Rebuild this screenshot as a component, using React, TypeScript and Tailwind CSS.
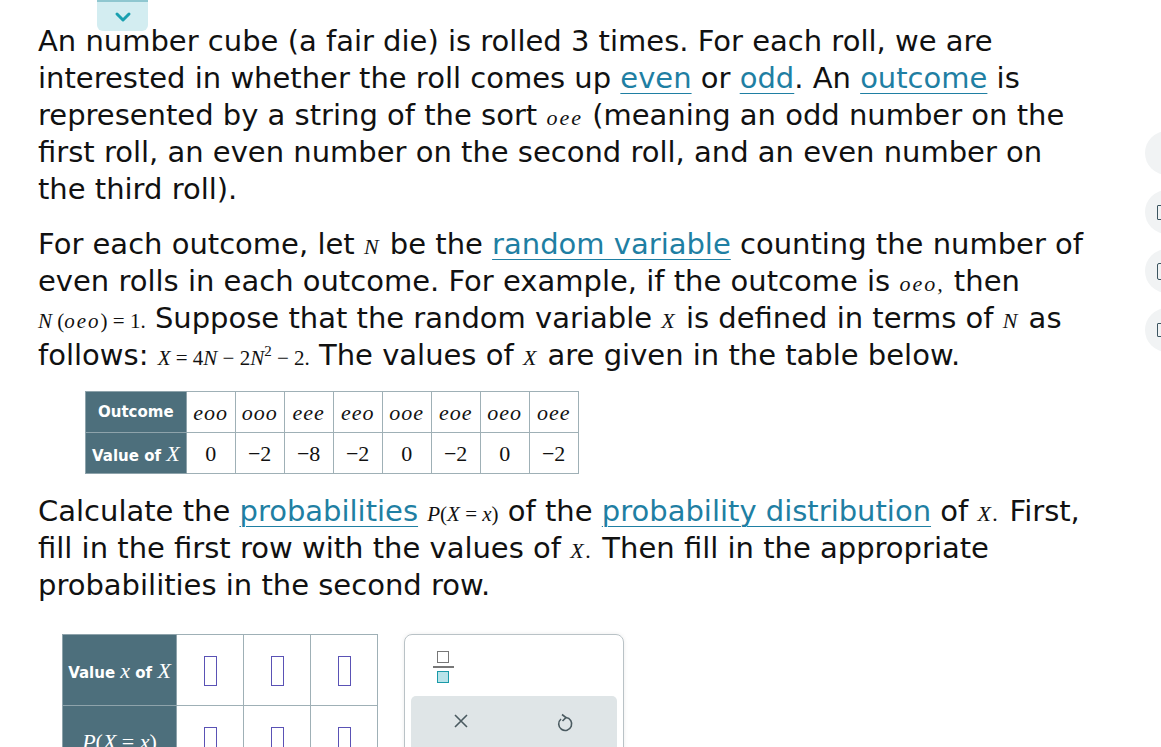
import React from "react";

const serif = { fontFamily: '"Liberation Serif", "Times New Roman", serif' };

function M({ children }: { children: React.ReactNode }) {
  return (
    <span className="italic text-[22px] tracking-[2px] leading-none" style={serif}>
      {children}
    </span>
  );
}

function Link({ children }: { children: React.ReactNode }) {
  return <span className="text-[#1f7fa3] underline underline-offset-[5px] decoration-1">{children}</span>;
}

function Box() {
  return <span className="inline-block w-[13px] h-[30px] border-[1.5px] border-[#5a52b5] bg-white align-middle" />;
}

export default function App() {
  const outcomes = ["eoo", "ooo", "eee", "eeo", "ooe", "eoe", "oeo", "oee"];
  const values = ["0", "−2", "−8", "−2", "0", "−2", "0", "−2"];
  return (
    <div
      className="relative w-[1161px] h-[747px] overflow-hidden bg-white text-[#111]"
      style={{ fontFamily: '"DejaVu Sans", Verdana, sans-serif' }}
    >
      {/* top tab */}
      <div className="absolute left-[97px] top-0 w-[51px] h-[31px] bg-[#d3edf1] rounded-b-[6px] border-t-2 border-[#8fc7d0] flex items-center justify-center">
        <svg width="20" height="12" viewBox="0 0 20 12">
          <path d="M4 3 L10 9 L16 3" stroke="#1aa0b0" strokeWidth="3" fill="none" strokeLinecap="round" strokeLinejoin="round" />
        </svg>
      </div>

      {/* right side circles */}
      <div className="absolute left-[1145px] top-[131px] flex flex-col gap-[15px]">
        <div className="w-[44px] h-[44px] rounded-full bg-[#f1f3f4]" />
        <div className="w-[44px] h-[44px] rounded-full bg-[#f1f3f4] flex items-center pl-[12px]">
          <span className="block w-[8px] h-[15px] border-[1.5px] border-[#3c5560] rounded-[1px]" />
        </div>
        <div className="w-[44px] h-[44px] rounded-full bg-[#f1f3f4] flex items-center pl-[12px]">
          <span className="block w-[7px] h-[17px] border-[1.5px] border-[#3c5560] rounded-[2px]" />
        </div>
        <div className="w-[44px] h-[44px] rounded-full bg-[#f1f3f4] flex items-center pl-[12px]">
          <span className="block w-[8px] h-[14px] border-[1.5px] border-[#3c5560] rounded-[1px]" />
        </div>
      </div>

      <div className="pl-[38px] pt-[23px] text-[29px] leading-[37px] whitespace-nowrap">
        <p>
          An number cube (a fair die) is rolled 3 times. For each roll, we are
          <br />
          interested in whether the roll comes up <Link>even</Link> or <Link>odd</Link>. An <Link>outcome</Link> is
          <br />
          represented by a string of the sort <M>oee</M> (meaning an odd number on the
          <br />
          first roll, an even number on the second roll, and an even number on
          <br />
          the third roll).
        </p>
        <p className="mt-[18px]">
          For each outcome, let <M>N</M> be the <Link>random variable</Link> counting the number of
          <br />
          even rolls in each outcome. For example, if the outcome is <M>oeo,</M> then
          <br />
          <span className="text-[21px] leading-none" style={serif}>
            <i>N</i> (<i className="tracking-[2px]">oeo</i>) = 1.
          </span>{" "}
          Suppose that the random variable <M>X</M> is defined in terms of <M>N</M> as
          <br />
          follows:{" "}
          <span className="text-[21px] leading-none" style={serif}>
            <i>X</i> = 4<i>N</i> − 2<i>N</i>
            <span className="relative -top-[9px] text-[15px] leading-none">2</span> − 2.
          </span>{" "}
          The values of <M>X</M> are given in the table below.
        </p>

        {/* table 1 */}
        <div className="mt-[17px] ml-[47px] leading-normal">
          <table className="border-collapse">
            <tbody>
              <tr className="h-[41px]">
                <td className="bg-[#4d6f7c] text-white font-bold text-[15px] px-[12px] border border-[#8ea3ab] w-[98px] text-center">
                  Outcome
                </td>
                {outcomes.map((o, i) => (
                  <td
                    key={i}
                    className="border border-[#9fb0b6] text-center italic text-[22px] w-[49px] px-[2px] tracking-[1px]"
                    style={serif}
                  >
                    {o}
                  </td>
                ))}
              </tr>
              <tr className="h-[41px]">
                <td className="bg-[#4d6f7c] text-white font-bold text-[15px] px-[6px] border border-[#8ea3ab] text-center whitespace-nowrap">
                  Value of <span className="italic font-normal text-[22px]" style={serif}>X</span>
                </td>
                {values.map((v, i) => (
                  <td key={i} className="border border-[#9fb0b6] text-center text-[22px]" style={serif}>
                    {v}
                  </td>
                ))}
              </tr>
            </tbody>
          </table>
        </div>

        <p className="mt-[19px]">
          Calculate the <Link>probabilities</Link>{" "}
          <span className="text-[21px] leading-none" style={serif}>
            <i>P</i>(<i>X</i> = <i>x</i>)
          </span>{" "}
          of the <Link>probability distribution</Link> of <M>X.</M> First,
          <br />
          fill in the first row with the values of <M>X.</M> Then fill in the appropriate
          <br />
          probabilities in the second row.
        </p>

        <div className="mt-[30px] ml-[24px] flex items-start gap-[26px] leading-normal">
          <table className="border-collapse">
            <tbody>
              <tr className="h-[71px]">
                <td className="bg-[#4d6f7c] text-white font-bold text-[15px] border border-[#8ea3ab] w-[114px] text-center whitespace-nowrap">
                  Value <span className="italic font-normal text-[22px]" style={serif}>x</span> of{" "}
                  <span className="italic font-normal text-[22px]" style={serif}>X</span>
                </td>
                {[0, 1, 2].map((i) => (
                  <td key={i} className="border border-[#9fb0b6] w-[67px] text-center align-middle">
                    <Box />
                  </td>
                ))}
              </tr>
              <tr className="h-[71px]">
                <td className="bg-[#4d6f7c] text-white border border-[#8ea3ab] text-center text-[22px]" style={serif}>
                  <i>P</i>(<i>X</i> = <i>x</i>)
                </td>
                {[0, 1, 2].map((i) => (
                  <td key={i} className="border border-[#9fb0b6] text-center align-middle">
                    <Box />
                  </td>
                ))}
              </tr>
            </tbody>
          </table>

          <div className="w-[220px] h-[140px] border border-[#b9c2c6] rounded-[8px] px-[6px] pt-[16px] shadow-[0_0_4px_rgba(0,0,0,0.08)]">
            <div className="ml-[21px] flex flex-col items-center w-[22px] gap-[3px]">
              <span className="block w-[12px] h-[12px] border-[1.5px] border-[#777]" />
              <span className="block w-[21px] h-[2px] bg-[#777]" />
              <span className="block w-[12px] h-[12px] border-[1.5px] border-[#1a9aa8] bg-[#b8e4ea]" />
            </div>
            <div className="mt-[13px] h-[60px] bg-[#dfe5e7] rounded-[5px] flex items-start pl-[42px] pt-[17px] gap-[87px]">
              <svg width="16" height="16" viewBox="0 0 16 16">
                <path d="M2 2 L14 14 M14 2 L2 14" stroke="#4a5a60" strokeWidth="1.6" />
              </svg>
              <svg width="18" height="20" viewBox="0 0 18 20">
                <path d="M5 6 A6.5 6.5 0 1 0 10 4.5" stroke="#4a5a60" strokeWidth="1.6" fill="none" />
                <path d="M6 1.5 L10 4.5 L6.5 8" stroke="#4a5a60" strokeWidth="1.6" fill="none" />
              </svg>
            </div>
          </div>
        </div>
      </div>
    </div>
  );
}
